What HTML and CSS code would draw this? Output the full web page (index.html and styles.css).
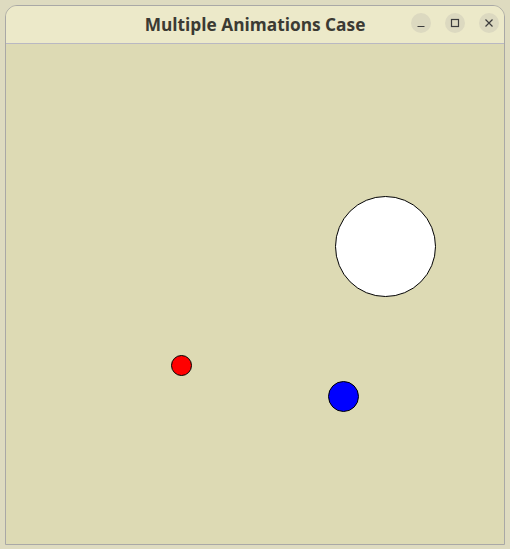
FILE: index.html
```html
<!DOCTYPE html>
<html>
<head>
<meta charset="utf-8">
<link rel="stylesheet" href="styles.css">
</head>
<body>
<div class="window">
  <div class="titlebar">
    <div class="title">Multiple Animations Case</div>
    <div class="controls">
      <div class="btn"><svg width="20" height="20" viewBox="0 0 20 20"><path d="M6.5 13.5h7" stroke="#3c3c3c" stroke-width="1.2"/></svg></div>
      <div class="btn"><svg width="20" height="20" viewBox="0 0 20 20"><rect x="6.5" y="6.5" width="7" height="7" fill="none" stroke="#3c3c3c" stroke-width="1.2"/></svg></div>
      <div class="btn"><svg width="20" height="20" viewBox="0 0 20 20"><path d="M6.5 6.5l7 7M13.5 6.5l-7 7" stroke="#3c3c3c" stroke-width="1.2"/></svg></div>
    </div>
  </div>
  <div class="canvas">
    <div class="ball white"></div>
    <div class="ball red"></div>
    <div class="ball blue"></div>
  </div>
</div>
</body>
</html>
```
FILE: styles.css
```css
html, body {
  margin: 0;
  padding: 0;
}
body {
  width: 510px;
  height: 549px;
  background: #dedbc0;
  padding: 5px;
  box-sizing: border-box;
  overflow: hidden;
}
.window {
  width: 500px;
  height: 540px;
  border: 1px solid #a9a8a6;
  border-radius: 12px 12px 0 0;
  box-sizing: border-box;
  display: flex;
  flex-direction: column;
  overflow: hidden;
  background: #dddab4;
}
.titlebar {
  height: 37px;
  flex: none;
  background: #ece9c9;
  border-bottom: 1px solid #b9b8c2;
  display: flex;
  align-items: center;
  justify-content: center;
  position: relative;
}
.title {
  font-family: "Open Sans", "DejaVu Sans", sans-serif;
  font-weight: bold;
  font-size: 17.3px;
  color: #3b3a33;
  margin-left: 0;
  margin-top: -1px;
}
.controls {
  position: absolute;
  right: 5px;
  top: 7px;
  display: flex;
  gap: 14px;
}
.btn {
  width: 20px;
  height: 20px;
  border-radius: 50%;
  background: #dcd9c0;
}
.btn svg { display: block; }
.canvas {
  flex: 1;
  position: relative;
}
.ball {
  position: absolute;
  border-radius: 50%;
  border: 1px solid #000;
  box-sizing: border-box;
}
.white {
  left: 329px;
  top: 152px;
  width: 101px;
  height: 101px;
  background: #ffffff;
}
.red {
  left: 165px;
  top: 311px;
  width: 21px;
  height: 21px;
  background: #ff0000;
}
.blue {
  left: 322px;
  top: 337px;
  width: 31px;
  height: 31px;
  background: #0000ff;
}
```
